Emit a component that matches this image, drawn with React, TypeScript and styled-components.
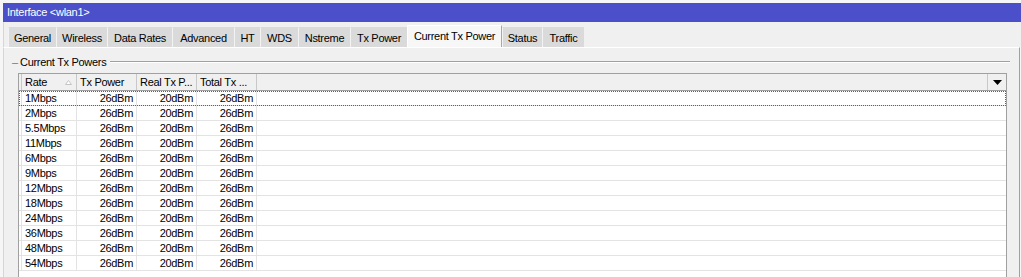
import React from "react";
import styled, { createGlobalStyle } from "styled-components";

const rates = [
  "1Mbps",
  "2Mbps",
  "5.5Mbps",
  "11Mbps",
  "6Mbps",
  "9Mbps",
  "12Mbps",
  "18Mbps",
  "24Mbps",
  "36Mbps",
  "48Mbps",
  "54Mbps",
];

// tab label + its width in the strip
const tabs: [string, number][] = [
  ["General", 48],
  ["Wireless", 51],
  ["Data Rates", 65],
  ["Advanced", 62],
  ["HT", 26],
  ["WDS", 38],
  ["Nstreme", 52],
  ["Tx Power", 57],
  ["Current Tx Power", 95],
  ["Status", 40],
  ["Traffic", 42],
];

const GlobalStyle = createGlobalStyle`
  html, body {
    margin: 0;
    padding: 0;
    background: #f6f6f6;
    overflow: hidden;
  }
  body {
    font-family: "Liberation Sans", Arial, sans-serif;
    font-size: 11px;
    letter-spacing: -0.3px;
    color: #000;
  }
`;

function App() {
  return (
    <>
      <GlobalStyle />
      <Page>
        <Window>
          <TitleBar>Interface &lt;wlan1&gt;</TitleBar>
          <TabStrip>
            {tabs.map(([t, w]) => (
              <Tab key={t} w={w} active={t === "Current Tx Power"}>
                {t}
              </Tab>
            ))}
          </TabStrip>
          <Panel>
            <Legend>
              <span className="dash">–</span>
              <span className="label">Current Tx Powers</span>
              <span className="line" />
            </Legend>
            <Table>
              <HeaderRow>
                <HeadCell />
                <HeadCell>
                  Rate
                  <SortArrow width="7" height="5" viewBox="0 0 7 5">
                    <path d="M0.5 4.5 L3.5 0.5 L6.5 4.5 Z" fill="#fff" stroke="#c4c4c4" />
                  </SortArrow>
                </HeadCell>
                <HeadCell>Tx Power</HeadCell>
                <HeadCell>Real Tx P...</HeadCell>
                <HeadCell>Total Tx ...</HeadCell>
                <HeadCell />
                <DropButton>
                  <svg width="9" height="5" viewBox="0 0 9 5">
                    <path d="M0 0 L9 0 L4.5 5 Z" fill="#000" />
                  </svg>
                </DropButton>
              </HeaderRow>
              {rates.map((r, i) => (
                <Row key={r} focused={i === 0}>
                  <Cell />
                  <Cell>{r}</Cell>
                  <Cell right>26dBm</Cell>
                  <Cell right>20dBm</Cell>
                  <Cell right>26dBm</Cell>
                  <Cell last />
                </Row>
              ))}
            </Table>
          </Panel>
        </Window>
      </Page>
    </>
  );
}

export default App;

const Page = styled.div`
  padding: 3px 0 0 3px;
  height: 100vh;
  box-sizing: border-box;
`;

const Window = styled.div`
  display: flex;
  flex-direction: column;
  height: 100%;
`;

const TitleBar = styled.div`
  height: 19px;
  line-height: 19px;
  background: #4b4fc9;
  color: #fff;
  padding-left: 4px;
  font-size: 11px;
`;

const TabStrip = styled.div`
  display: flex;
  align-items: flex-end;
  height: 25px;
  padding-left: 4px;
  background: #f0f0f0;
  border-left: 1px solid #d6d6d6;
`;

const Tab = styled.div<{ active?: boolean; w: number }>`
  width: ${(p) => p.w}px;
  height: ${(p) => (p.active ? 22 : 20)}px;
  line-height: ${(p) => (p.active ? 20 : 21)}px;
  text-align: center;
  background: ${(p) => (p.active ? "#f7f7f7" : "#dadada")};
  border-left: 1px solid ${(p) => (p.active ? "#ffffff" : "#f3f3f3")};
  border-top: 1px solid ${(p) => (p.active ? "#ffffff" : "#dadada")};
  border-right: ${(p) => (p.active ? "1px solid #a8a8a8" : "none")};
  box-sizing: border-box;
  white-space: nowrap;
  position: relative;
  z-index: ${(p) => (p.active ? 1 : 0)};
`;

const Panel = styled.div`
  flex: 1;
  min-height: 0;
  display: flex;
  flex-direction: column;
  background: #f0f0f0;
  border-top: 1px solid #ffffff;
  border-left: 1px solid #d6d6d6;
  border-right: 1px solid #a0a0a0;
  margin-right: 1px;
  padding: 8px 9px 0 8px;
`;

const Legend = styled.div`
  display: flex;
  align-items: center;
  height: 11px;
  .dash {
    color: #777;
    width: 8px;
  }
  .label {
    padding-right: 4px;
    white-space: nowrap;
  }
  .line {
    flex: 1;
    height: 0;
    border-top: 1px solid #a0a0a0;
    border-bottom: 1px solid #ffffff;
  }
`;

const Table = styled.div`
  margin: 6px 3px 0 6px;
  flex: 1;
  min-height: 0;
  overflow: hidden;
  background: #fff;
  border: 1px solid #a0a0a0;
  border-bottom: none;
  display: flex;
  flex-direction: column;
`;

const columns = "3px 55px 60px 60px 60px 1fr 18px";

const HeaderRow = styled.div`
  display: grid;
  grid-template-columns: ${columns};
  flex: none;
  height: 16px;
  background: #f0f0f0;
  border-bottom: 1px solid #a0a0a0;
`;

const HeadCell = styled.div`
  position: relative;
  line-height: 16px;
  padding-left: 3px;
  border-right: 1px solid #c8c8c8;
  white-space: nowrap;
  overflow: hidden;
  &:first-child {
    padding: 0;
  }
`;

const SortArrow = styled.svg`
  position: absolute;
  right: 4px;
  top: 6px;
`;

const DropButton = styled.div`
  display: flex;
  align-items: center;
  justify-content: center;
`;

const Row = styled.div<{ focused?: boolean }>`
  display: grid;
  grid-template-columns: 3px 55px 60px 60px 60px 1fr;
  flex: none;
  height: 15px;
  box-sizing: border-box;
  border-bottom: 1px solid #e3e3e3;
  outline: ${(p) => (p.focused ? "1px dotted #606060" : "none")};
  outline-offset: -1px;
`;

const Cell = styled.div<{ right?: boolean; last?: boolean }>`
  line-height: 14px;
  padding: ${(p) => (p.right ? "0 3px 0 0" : "0 0 0 3px")};
  text-align: ${(p) => (p.right ? "right" : "left")};
  border-right: ${(p) => (p.last ? "none" : "1px solid #e3e3e3")};
  white-space: nowrap;
  &:first-child {
    padding: 0;
  }
`;
